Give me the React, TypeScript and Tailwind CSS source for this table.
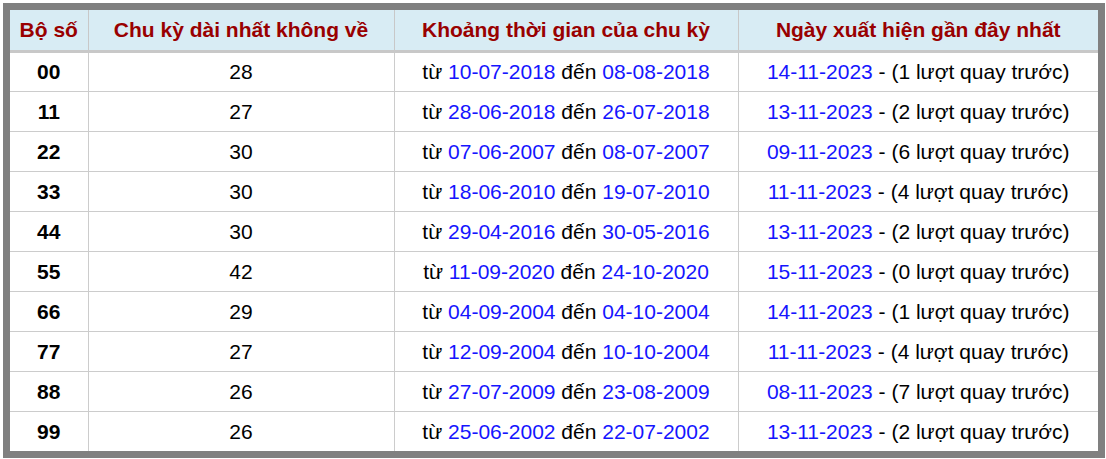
const rows = [
  { so: "00", len: 28, from: "10-07-2018", to: "08-08-2018", last: "14-11-2023", ago: 1 },
  { so: "11", len: 27, from: "28-06-2018", to: "26-07-2018", last: "13-11-2023", ago: 2 },
  { so: "22", len: 30, from: "07-06-2007", to: "08-07-2007", last: "09-11-2023", ago: 6 },
  { so: "33", len: 30, from: "18-06-2010", to: "19-07-2010", last: "11-11-2023", ago: 4 },
  { so: "44", len: 30, from: "29-04-2016", to: "30-05-2016", last: "13-11-2023", ago: 2 },
  { so: "55", len: 42, from: "11-09-2020", to: "24-10-2020", last: "15-11-2023", ago: 0 },
  { so: "66", len: 29, from: "04-09-2004", to: "04-10-2004", last: "14-11-2023", ago: 1 },
  { so: "77", len: 27, from: "12-09-2004", to: "10-10-2004", last: "11-11-2023", ago: 4 },
  { so: "88", len: 26, from: "27-07-2009", to: "23-08-2009", last: "08-11-2023", ago: 7 },
  { so: "99", len: 26, from: "25-06-2002", to: "22-07-2002", last: "13-11-2023", ago: 2 },
];

export default function App() {
  return (
    <div className="bg-white h-[459px] pt-[3px] pl-[3px] font-['Liberation_Sans',Arial,sans-serif]">
      <div className="w-[1102px] border-[7px] border-[#808080]">
        <table className="w-full table-fixed border-collapse text-[21px] leading-none text-black">
          <colgroup>
            <col className="w-[78px]" />
            <col className="w-[306px]" />
            <col className="w-[344px]" />
            <col className="w-[360px]" />
          </colgroup>
          <thead>
            <tr className="h-[41px] bg-[#d8ecf4] text-[#990000] border-b-[3px] border-[#c8c8c8]">
              <th className="font-bold text-center">Bộ số</th>
              <th className="font-bold text-center border-l border-[#c8c8c8]">Chu kỳ dài nhất không về</th>
              <th className="font-bold text-center border-l border-[#c8c8c8]">Khoảng thời gian của chu kỳ</th>
              <th className="font-bold text-center border-l border-[#c8c8c8]">Ngày xuất hiện gần đây nhất</th>
            </tr>
          </thead>
          <tbody>
            {rows.map((r) => (
              <tr key={r.so} className="h-[40px] border-b border-[#cccccc] last:border-0">
                <td className="text-center font-bold">{r.so}</td>
                <td className="text-center border-l border-[#cccccc]">{r.len}</td>
                <td className="text-center border-l border-[#cccccc] whitespace-nowrap">
                  từ <span className="text-[#1515ff]">{r.from}</span> đến{" "}
                  <span className="text-[#1515ff]">{r.to}</span>
                </td>
                <td className="text-center border-l border-[#cccccc] whitespace-nowrap">
                  <span className="text-[#1515ff]">{r.last}</span> - ({r.ago} lượt quay trước)
                </td>
              </tr>
            ))}
          </tbody>
        </table>
      </div>
    </div>
  );
}
